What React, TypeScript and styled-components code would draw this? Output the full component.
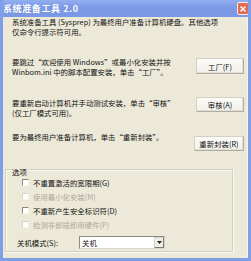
import React from "react";
import styled, { createGlobalStyle } from "styled-components";

const Global = createGlobalStyle`
  html, body { margin: 0; padding: 0; background: #ece9d8; }
  body { font-family: "Noto Sans CJK SC", "Noto Sans", sans-serif; }
`;

const Window = styled.div`
  width: 251px;
  height: 261px;
  box-sizing: border-box;
  display: flex;
  flex-direction: column;
  background: #ece9d8;
  border-left: 3px solid #7f9ee6;
  border-right: 3px solid #7f9ee6;
  border-bottom: 3px solid #7f9ee6;
  overflow: hidden;
`;

const TitleBar = styled.div`
  height: 17px;
  margin: 0 -3px;
  padding: 0 2px 0 3px;
  display: flex;
  align-items: center;
  justify-content: space-between;
  background: linear-gradient(#93aef0, #7c9ae6 40%, #7a98e5);
  flex-shrink: 0;
`;

const Title = styled.span`
  color: #ffffff;
  font-size: 9px;
  font-weight: bold;
  letter-spacing: 0.6px;
  line-height: 17px;
  text-shadow: 0 0 1px #6a86d0;
`;

const CloseBtn = styled.div`
  width: 12px;
  height: 13px;
  box-sizing: border-box;
  border: 1px solid #f4f0ee;
  border-radius: 2px;
  background: #e06a52;
  display: flex;
  align-items: center;
  justify-content: center;
`;

const Body = styled.div`
  flex: 1;
  display: flex;
  flex-direction: column;
  padding: 0 3px 0 9px;
  border-right: 1px solid #f6f4ea;
`;

const Text = styled.p`
  margin: 0;
  font-size: 7.4px;
  line-height: 10px;
  color: #111;
  white-space: nowrap;
`;

const Row = styled.div<{ $top: number; $btnTop: number }>`
  display: flex;
  justify-content: space-between;
  align-items: flex-start;
  margin-top: ${(p) => p.$top}px;
  & > button { margin-top: ${(p) => p.$btnTop}px; }
`;

const Button = styled.button<{ $w: number; $h?: number }>`
  width: ${(p) => p.$w}px;
  height: ${(p) => p.$h ?? 16}px;
  flex-shrink: 0;
  padding: 0;
  font-family: inherit;
  font-size: 7.4px;
  color: #111;
  background: linear-gradient(#fbfbf8, #f1f0ea);
  border: 1px solid #d4d0c6;
  border-right-color: #b0aca2;
  border-bottom-color: #b0aca2;
  border-radius: 1px;
  box-shadow: inset -1px -1px 0 #e2ded3;
`;

const GroupLabel = styled.div`
  font-size: 7.4px;
  line-height: 9px;
  color: #111;
  margin: 16px 0 0 0;
  position: relative;
  z-index: 1;
  align-self: flex-start;
  background: #ece9d8;
  padding: 0 2px 0 0;
`;

const Group = styled.div`
  margin: -7px 0 0 -7px;
  width: 228px;
  height: 83px;
  box-sizing: border-box;
  border: 1px solid #d0d0bf;
  box-shadow: 1px 1px 0 #fbfaf4, inset 1px 1px 0 #fbfaf4;
  padding: 7px 0 0 16px;
  display: flex;
  flex-direction: column;
  gap: 4px;
`;

const CheckRow = styled.div<{ $disabled?: boolean }>`
  display: flex;
  align-items: center;
  gap: 4px;
  height: 10px;
  font-size: 7.4px;
  color: ${(p) => (p.$disabled ? "#aca899" : "#111")};
`;

const Box = styled.span<{ $disabled?: boolean }>`
  width: 7px;
  height: 7px;
  box-sizing: border-box;
  background: #fff;
  border: 1px solid ${(p) => (p.$disabled ? "#d6d3c5" : "#8a8a80")};
  border-right-color: #f4f2ea;
  border-bottom-color: #f4f2ea;
`;

const ComboRow = styled.div`
  display: flex;
  align-items: center;
  margin: 3px 0 0 -5px;
  height: 13px;
  font-size: 7.4px;
  color: #111;
`;

const ComboLabel = styled.span`
  width: 62px;
`;

const Combo = styled.div`
  width: 86px;
  height: 13px;
  box-sizing: border-box;
  background: #fff;
  border: 1px solid #8c8c84;
  border-right-color: #d9d6cc;
  border-bottom-color: #d9d6cc;
  display: flex;
  align-items: center;
  justify-content: space-between;
  padding-left: 2px;
`;

const Arrow = styled.div`
  width: 10px;
  height: 11px;
  box-sizing: border-box;
  background: #efede4;
  border: 1px solid #d4d0c6;
  border-right-color: #7c7a72;
  border-bottom-color: #7c7a72;
  display: flex;
  align-items: center;
  justify-content: center;
`;

const options = [
  { label: "不重置激活的宽限期(G)", disabled: false },
  { label: "使用最小化安装(M)", disabled: true },
  { label: "不重新产生安全标识符(D)", disabled: false },
  { label: "检测非即插即用硬件(P)", disabled: true },
];

export default function App() {
  return (
    <>
      <Global />
      <Window>
        <TitleBar>
          <Title>系统准备工具 2.0</Title>
          <CloseBtn>
            <svg width="8" height="8" viewBox="0 0 8 8">
              <path d="M1.5 1.5 L6.5 6.5 M6.5 1.5 L1.5 6.5" stroke="#fff" strokeWidth="1.4" />
            </svg>
          </CloseBtn>
        </TitleBar>
        <Body>
          <Text>系统准备工具 (Sysprep) 为最终用户准备计算机硬盘。其他选项</Text>
          <Text>仅命令行提示符可用。</Text>
          <Row $top={20} $btnTop={1}>
            <div>
              <Text>要跳过“欢迎使用 Windows”或最小化安装并按</Text>
              <Text>Winbom.ini 中的脚本配置安装，单击“工厂”。</Text>
            </div>
            <Button $w={48}>工厂(F)</Button>
          </Row>
          <Row $top={21} $btnTop={-1}>
            <div>
              <Text>要重新启动计算机并手动测试安装，单击“审核”</Text>
              <Text>(仅工厂模式可用)。</Text>
            </div>
            <Button $w={48} $h={15}>审核(A)</Button>
          </Row>
          <Row $top={14} $btnTop={4}>
            <Text>要为最终用户准备计算机，单击“重新封装”。</Text>
            <Button $w={50} $h={15}>重新封装(R)</Button>
          </Row>
          <GroupLabel>选项</GroupLabel>
          <Group>
            {options.map((o) => (
              <CheckRow key={o.label} $disabled={o.disabled}>
                <Box $disabled={o.disabled} />
                {o.label}
              </CheckRow>
            ))}
            <ComboRow>
              <ComboLabel>关机模式(S):</ComboLabel>
              <Combo>
                关机
                <Arrow>
                  <svg width="5" height="4" viewBox="0 0 5 4">
                    <path d="M0 0 H5 L2.5 3 Z" fill="#222" />
                  </svg>
                </Arrow>
              </Combo>
            </ComboRow>
          </Group>
        </Body>
      </Window>
    </>
  );
}
